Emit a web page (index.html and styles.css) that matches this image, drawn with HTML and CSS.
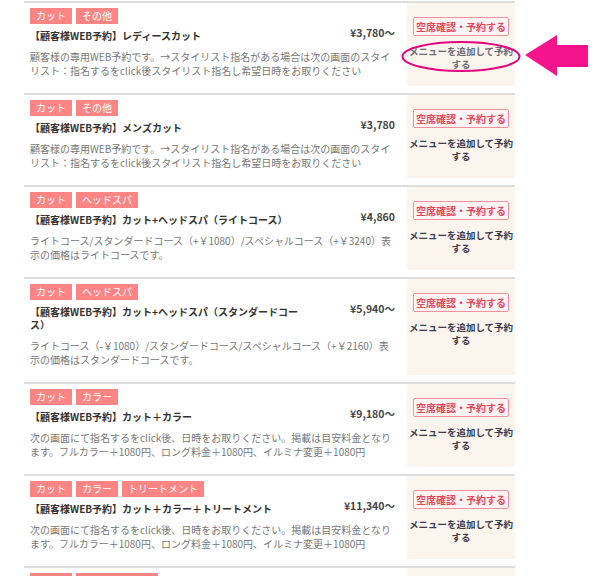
FILE: index.html
```html
<!DOCTYPE html>
<html lang="ja">
<head>
<meta charset="utf-8">
<title>メニュー</title>
<link rel="stylesheet" href="styles.css">
</head>
<body>
<div class="page">
  <ul class="menu-list">
    <li class="menu-row">
      <div class="menu-main">
        <div class="tags"><span class="tag">カット</span><span class="tag">その他</span></div>
        <div class="head"><p class="title">【顧客様WEB予約】レディースカット</p><p class="price">¥3,780〜</p></div>
        <p class="desc">顧客様の専用WEB予約です。→スタイリスト指名がある場合は次の画面のスタイリスト：指名するをclick後スタイリスト指名し希望日時をお取りください</p>
      </div>
      <div class="menu-side">
        <a class="btn-reserve">空席確認・予約する</a>
        <a class="add-link is-hover">メニューを追加して予約する</a>
      </div>
    </li>
    <li class="menu-row">
      <div class="menu-main">
        <div class="tags"><span class="tag">カット</span><span class="tag">その他</span></div>
        <div class="head"><p class="title">【顧客様WEB予約】メンズカット</p><p class="price">¥3,780</p></div>
        <p class="desc">顧客様の専用WEB予約です。→スタイリスト指名がある場合は次の画面のスタイリスト：指名するをclick後スタイリスト指名し希望日時をお取りください</p>
      </div>
      <div class="menu-side">
        <a class="btn-reserve">空席確認・予約する</a>
        <a class="add-link">メニューを追加して予約する</a>
      </div>
    </li>
    <li class="menu-row">
      <div class="menu-main">
        <div class="tags"><span class="tag">カット</span><span class="tag">ヘッドスパ</span></div>
        <div class="head"><p class="title">【顧客様WEB予約】カット+ヘッドスパ（ライトコース）</p><p class="price">¥4,860</p></div>
        <p class="desc">ライトコース/スタンダードコース（+￥1080）/スペシャルコース（+￥3240）表示の価格はライトコースです。</p>
      </div>
      <div class="menu-side">
        <a class="btn-reserve">空席確認・予約する</a>
        <a class="add-link">メニューを追加して予約する</a>
      </div>
    </li>
    <li class="menu-row">
      <div class="menu-main">
        <div class="tags"><span class="tag">カット</span><span class="tag">ヘッドスパ</span></div>
        <div class="head"><p class="title">【顧客様WEB予約】カット+ヘッドスパ（スタンダードコース）</p><p class="price">¥5,940〜</p></div>
        <p class="desc">ライトコース（-￥1080）/スタンダードコース/スペシャルコース（+￥2160）表示の価格はスタンダードコースです。</p>
      </div>
      <div class="menu-side">
        <a class="btn-reserve">空席確認・予約する</a>
        <a class="add-link">メニューを追加して予約する</a>
      </div>
    </li>
    <li class="menu-row">
      <div class="menu-main">
        <div class="tags"><span class="tag">カット</span><span class="tag">カラー</span></div>
        <div class="head"><p class="title">【顧客様WEB予約】カット＋カラー</p><p class="price">¥9,180〜</p></div>
        <p class="desc">次の画面にて指名するをclick後、日時をお取りください。掲載は目安料金となります。フルカラー＋1080円、ロング料金＋1080円、イルミナ変更＋1080円</p>
      </div>
      <div class="menu-side">
        <a class="btn-reserve">空席確認・予約する</a>
        <a class="add-link">メニューを追加して予約する</a>
      </div>
    </li>
    <li class="menu-row">
      <div class="menu-main">
        <div class="tags"><span class="tag">カット</span><span class="tag">カラー</span><span class="tag">トリートメント</span></div>
        <div class="head"><p class="title">【顧客様WEB予約】カット＋カラー＋トリートメント</p><p class="price">¥11,340〜</p></div>
        <p class="desc">次の画面にて指名するをclick後、日時をお取りください。掲載は目安料金となります。フルカラー＋1080円、ロング料金＋1080円、イルミナ変更＋1080円</p>
      </div>
      <div class="menu-side">
        <a class="btn-reserve">空席確認・予約する</a>
        <a class="add-link">メニューを追加して予約する</a>
      </div>
    </li>
    <li class="menu-row">
      <div class="menu-main">
        <div class="tags"><span class="tag">カット</span><span class="tag">トリートメント</span></div>
        <div class="head"><p class="title">【顧客様WEB予約】カット＋トリートメント</p><p class="price">¥6,480〜</p></div>
        <p class="desc">次の画面にて指名するをclick後、日時をお取りください。</p>
      </div>
      <div class="menu-side">
        <a class="btn-reserve">空席確認・予約する</a>
        <a class="add-link">メニューを追加して予約する</a>
      </div>
    </li>
  </ul>
  <svg class="annotation" width="600" height="100" viewBox="0 0 600 100" aria-hidden="true">
    <ellipse cx="461" cy="56.5" rx="58.5" ry="14.5" fill="none" stroke="#e5007f" stroke-width="2"/>
    <polygon points="525,55 557,35 557,45 588,45 588,67 557,67 557,76" fill="#f5148c"/>
  </svg>
</div>
</body>
</html>
```

FILE: styles.css
```css
* {
  box-sizing: border-box;
}

html, body {
  margin: 0;
  padding: 0;
  background: #ffffff;
}

body {
  font-family: "Noto Sans CJK JP", "Noto Sans", sans-serif;
  color: #333333;
  overflow: hidden;
}

.page {
  position: relative;
  width: 600px;
  height: 576px;
  overflow: hidden;
  padding-top: 1px;
}

.menu-list {
  list-style: none;
  margin: 0 0 0 24px;
  padding: 0;
  width: 491px;
}

.menu-row {
  display: flex;
  align-items: stretch;
  border-top: 2px solid #dddddd;
}

.menu-main {
  flex: 1;
  min-width: 0;
  padding: 5px 12px 15px 6px;
}

.tags {
  display: flex;
  gap: 4px;
  height: 16px;
}

.tag {
  display: block;
  height: 16px;
  line-height: 16px;
  padding: 0 6px;
  background: #ff8585;
  color: #ffffff;
  font-size: 10px;
}

.head {
  display: grid;
  grid-template-columns: 1fr 95px;
  align-items: start;
  margin-top: 5px;
}

.title {
  margin: 0;
  font-size: 10px;
  font-weight: bold;
  line-height: 13px;
  color: #333333;
}

.price {
  margin: 0;
  text-align: right;
  font-size: 10.5px;
  font-weight: bold;
  line-height: 13px;
  color: #444444;
  position: relative;
  top: -3px;
}

.desc {
  margin: 8px 0 0;
  font-size: 10px;
  line-height: 14px;
  color: #777777;
}

.menu-side {
  width: 108px;
  flex: none;
  margin-bottom: 7px;
  background: #fcf5ee;
  padding-top: 14px;
  display: flex;
  flex-direction: column;
  align-items: center;
}

.btn-reserve {
  display: block;
  width: 96px;
  height: 19px;
  line-height: 17px;
  border: 1px solid #f2919e;
  border-radius: 2px;
  background: #fff4f4;
  color: #e8465c;
  font-size: 10px;
  font-weight: bold;
  text-align: center;
  white-space: nowrap;
}

.add-link {
  display: block;
  width: 108px;
  margin-top: 9px;
  font-size: 9.5px;
  font-weight: bold;
  line-height: 13px;
  color: #3b3b4c;
  text-align: center;
}

.add-link.is-hover {
  color: #6a6a72;
}

.annotation {
  position: absolute;
  left: 0;
  top: 0;
  pointer-events: none;
}
```
